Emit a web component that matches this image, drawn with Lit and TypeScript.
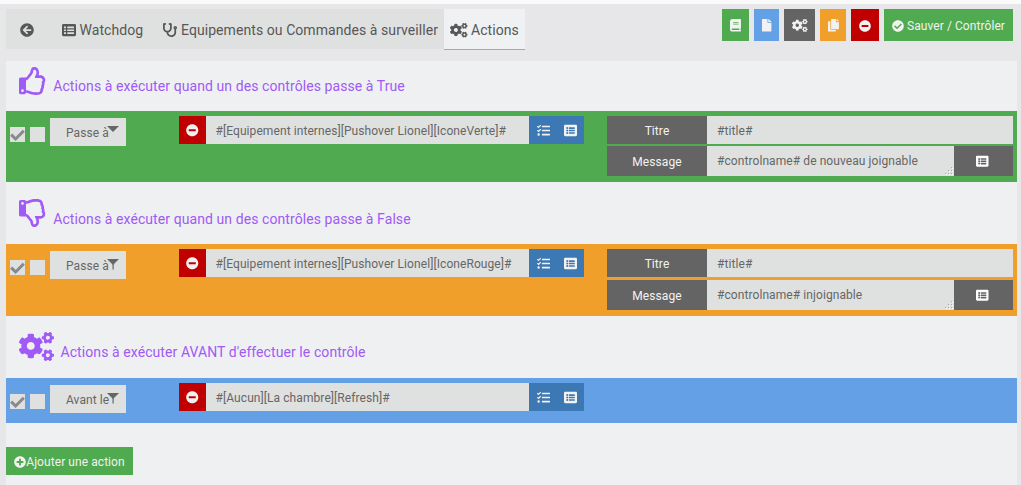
import { LitElement, html, css, svg, nothing } from "lit";
import { customElement, property } from "lit/decorators.js";

const smallCog =
  "M512.1 191l-8.2 14.3c-3 5.3-9.4 7.5-15.1 5.4-11.8-4.4-22.6-10.7-32.1-18.6-4.6-3.8-5.8-10.5-2.8-15.7l8.2-14.3c-6.9-8-12.3-17.3-15.9-27.4h-16.5c-6 0-11.2-4.3-12.2-10.3-2-12-2.1-24.6 0-37.1 1-6 6.2-10.4 12.2-10.4h16.5c3.6-10.1 9-19.4 15.9-27.4l-8.2-14.3c-3-5.2-1.9-11.9 2.8-15.7 9.5-7.9 20.4-14.2 32.1-18.6 5.7-2.1 12.1.1 15.1 5.4l8.2 14.3c10.5-1.9 21.2-1.9 31.7 0L552 6.3c3-5.3 9.4-7.5 15.1-5.4 11.8 4.4 22.6 10.7 32.1 18.6 4.6 3.8 5.8 10.5 2.8 15.7l-8.2 14.3c6.9 8 12.3 17.3 15.9 27.4h16.5c6 0 11.2 4.3 12.2 10.3 2 12 2.1 24.6 0 37.1-1 6-6.2 10.4-12.2 10.4h-16.5c-3.6 10.1-9 19.4-15.9 27.4l8.2 14.3c3 5.2 1.9 11.9-2.8 15.7-9.5 7.9-20.4 14.2-32.1 18.6-5.7 2.1-12.1-.1-15.1-5.4l-8.2-14.3c-10.4 1.9-21.2 1.9-31.7 0zm-10.5-58.8c38.5 29.6 82.4-14.3 52.8-52.8-38.5-29.7-82.4 14.3-52.8 52.8z";
const bigCog =
  "M386.3 286.1l33.7 16.8c10.1 5.8 14.5 18.1 10.5 29.1-8.9 24.2-26.4 46.4-42.6 65.8-7.4 8.9-20.2 11.1-30.3 5.3l-29.1-16.8c-16 13.7-34.6 24.6-54.9 31.7v33.6c0 11.6-8.3 21.6-19.7 23.6-24.6 4.2-50.4 4.4-75.9 0-11.5-2-20-11.9-20-23.6V418c-20.3-7.2-38.9-18-54.9-31.7L74 403c-10 5.8-22.9 3.6-30.3-5.3-16.2-19.4-33.3-41.6-42.2-65.7-4-10.9.4-23.2 10.5-29.1l33.3-16.8c-3.9-20.9-3.9-42.4 0-63.4L12 205.8c-10.1-5.8-14.6-18.1-10.5-29 8.9-24.2 26-46.4 42.2-65.8 7.4-8.9 20.2-11.1 30.3-5.3l29.1 16.8c16-13.7 34.6-24.6 54.9-31.7V57.1c0-11.5 8.2-21.5 19.6-23.5 24.6-4.2 50.5-4.4 76-.1 11.5 2 20 11.9 20 23.6v33.6c20.3 7.2 38.9 18 54.9 31.7l29.1-16.8c10-5.8 22.9-3.6 30.3 5.3 16.2 19.4 33.2 41.6 42.1 65.8 4 10.9.1 23.2-10 29.1l-33.7 16.8c3.9 21 3.9 42.5 0 63.5zm-117.6 21.1c59.2-77-28.7-164.9-105.7-105.7-59.2 77 28.7 164.9 105.7 105.7z";
const thumb =
  "M466.27 286.69C475.04 271.84 480 256 480 236.85c0-44.015-37.218-85.58-85.82-85.58H357.7c4.92-12.81 8.85-28.13 8.85-46.54C366.55 31.936 328.86 0 271.28 0c-61.607 0-58.093 94.933-71.76 108.6-22.747 22.747-49.615 66.447-68.76 83.4H32c-17.673 0-32 14.327-32 32v240c0 17.673 14.327 32 32 32h64c14.893 0 27.408-10.174 30.978-23.95 44.509 1.001 75.06 39.94 177.802 39.94 7.22 0 15.22.01 22.22.01 77.117 0 111.986-39.423 112.94-95.33 13.319-18.425 20.299-43.122 17.34-66.99 9.854-18.452 13.664-40.343 8.99-62.99zm-61.75 53.83c12.56 21.13 1.26 49.41-13.94 57.57 7.7 48.78-17.608 65.9-53.12 65.9h-37.82c-71.639 0-118.029-37.82-171.64-37.82V240h10.92c28.36 0 67.98-70.89 94.54-97.46 28.36-28.36 18.91-75.63 37.82-94.54 47.27 0 47.27 32.98 47.27 56.73 0 39.17-28.36 56.72-28.36 94.54h103.99c21.11 0 37.73 18.91 37.82 37.82.09 18.9-12.82 37.81-22.27 37.81 13.489 14.555 16.371 45.236-5.21 65.62zM88 432c0 13.255-10.745 24-24 24s-24-10.745-24-24 10.745-24 24-24 24 10.745 24 24z";

const p = (d: string) => svg`<path fill-rule="evenodd" d=${d}></path>`;
const disc = "M256 8C119 8 8 119 8 256s111 248 248 248 248-111 248-248S393 8 256 8z";
const lineRow = (y: number) =>
  `M88 ${y}a40 40 0 1 0 80 0a40 40 0 1 0-80 0zM204 ${y - 32}h208a12 12 0 0 1 12 12v40a12 12 0 0 1-12 12h-208a12 12 0 0 1-12-12v-40a12 12 0 0 1 12-12z`;

// Glyph width on a 512-unit em, and its drawing.
const ICONS: Record<string, [number, unknown]> = {
  back: [512, p("M256 504C119 504 8 393 8 256S119 8 256 8s248 111 248 248-111 248-248 248zm28.9-143.6L209.4 288H392c13.3 0 24-10.7 24-24v-16c0-13.3-10.7-24-24-24H209.4l75.5-72.4c9.7-9.3 9.9-24.8.4-34.3l-11-10.9c-9.4-9.4-24.6-9.4-33.9 0L107.7 239c-9.4 9.4-9.4 24.6 0 33.9l132.7 132.7c9.4 9.4 24.6 9.4 33.9 0l11-10.9c9.5-9.5 9.3-25-.4-34.3z")],
  table: [512, p("M464 32H48C21.5 32 0 53.500 0 80v352c0 26.500 21.500 48 48 48h416c26.500 0 48-21.500 48-48V80c0-26.500-21.500-48-48-48zM72 128h72v64H72zM192 128h248v64H192zM72 234h72v56H72zM192 234h248v56H192zM72 336h72v64H72zM192 336h248v64H192z")],
  list: [512, p("M464 480H48c-26.510 0-48-21.490-48-48V80c0-26.510 21.490-48 48-48h416c26.510 0 48 21.490 48 48v352c0 26.510-21.490 48-48 48z" + lineRow(160) + lineRow(256) + lineRow(352))],
  stethoscope: [512, p("M447.1 112c-34.2.5-62.3 28.400-63 62.600-.5 24.300 12.500 45.600 32 56.800V344c0 57.300-50.200 104-112 104-60 0-109.200-44.100-111.900-99.200C265 333.800 320 269.200 320 192V36.600c0-11.400-8.100-21.300-19.300-23.500L237.800.5c-13-2.600-25.600 5.800-28.200 18.800L206.400 35c-2.600 13 5.800 25.600 18.800 28.200l30.700 6.100v121.400c0 52.900-42.200 96.700-95.100 97.200-53.400.5-96.900-42.700-96.900-96V69.400l30.700-6.100c13-2.600 21.400-15.200 18.800-28.200l-3.100-15.700C107.700 6.400 95.100-2 82.100.6L19.300 13C8.100 15.300 0 25.100 0 36.600V192c0 77.300 55.100 142 128.100 156.800C130.700 439.200 208.600 512 304 512c97 0 176-75.400 176-168V231.400c19.100-11.100 32-31.700 32-55.400 0-35.700-29.200-64.500-64.900-64zm.9 80c-8.800 0-16-7.200-16-16s7.200-16 16-16 16 7.200 16 16-7.200 16-16 16z")],
  cogs: [640, svg`${p(smallCog)}${p(bigCog)}<g transform="translate(0 320)">${p(smallCog)}</g>`],
  book: [448, p("M448 360V24c0-13.300-10.700-24-24-24H96C43 0 0 43 0 96v320c0 53 43 96 96 96h328c13.300 0 24-10.700 24-24v-16c0-7.500-3.500-14.300-8.900-18.700-4.200-15.400-4.200-59.300 0-74.700 5.400-4.300 8.900-11.100 8.900-18.600zM128 134c0-3.300 2.700-6 6-6h212c3.300 0 6 2.700 6 6v20c0 3.300-2.700 6-6 6H134c-3.300 0-6-2.700-6-6zM128 198c0-3.300 2.700-6 6-6h212c3.300 0 6 2.700 6 6v20c0 3.300-2.700 6-6 6H134c-3.300 0-6-2.700-6-6zM381.400 448H96c-17.700 0-32-14.300-32-32 0-17.600 14.400-32 32-32h285.400c-1.900 17.100-1.900 46.900 0 64z")],
  file: [384, p("M224 136V0H24C10.700 0 0 10.700 0 24v464c0 13.300 10.700 24 24 24h336c13.300 0 24-10.700 24-24V160H248c-13.200 0-24-10.800-24-24zm160-14.100v6.100H256V0h6.100c6.400 0 12.500 2.500 17 7l97.900 98c4.500 4.500 7 10.600 7 16.900z")],
  copy: [448, p("M320 448v40c0 13.255-10.745 24-24 24H24c-13.255 0-24-10.745-24-24V120c0-13.255 10.745-24 24-24h72v296c0 30.879 25.121 56 56 56h168zm0-344V0H152c-13.255 0-24 10.745-24 24v368c0 13.255 10.745 24 24 24h272c13.255 0 24-10.745 24-24V128H344c-13.200 0-24-10.800-24-24zm120.971-31.029L375.029 7.029A24 24 0 0 0 358.059 0H352v96h96v-6.059a24 24 0 0 0-7.029-16.970z")],
  minus: [512, p(disc + "M124 296c-6.600 0-12-5.400-12-12v-56c0-6.600 5.400-12 12-12h264c6.600 0 12 5.400 12 12v56c0 6.600-5.400 12-12 12H124z")],
  plus: [512, p(disc + "m144 276c0 6.600-5.400 12-12 12h-92v92c0 6.600-5.400 12-12 12h-56c-6.600 0-12-5.400-12-12v-92h-92c-6.600 0-12-5.400-12-12v-56c0-6.600 5.400-12 12-12h92v-92c0-6.600 5.400-12 12-12h56c6.600 0 12 5.400 12 12v92h92c6.600 0 12 5.400 12 12v56z")],
  check: [512, p("M504 256c0 136.967-111.033 248-248 248S8 392.967 8 256 119.033 8 256 8s248 111.033 248 248zM227.314 387.314l184-184c6.248-6.248 6.248-16.379 0-22.627l-22.627-22.627c-6.248-6.249-16.379-6.249-22.628 0L216 308.118l-70.059-70.059c-6.248-6.248-16.379-6.248-22.628 0l-22.627 22.627c-6.248 6.248-6.248 16.379 0 22.627l104 104c6.249 6.249 16.379 6.249 22.628.001z")],
  tasks: [512, p("M139.610 35.500a12 12 0 0 0-17 0L58.930 98.810l-22.700-22.120a12 12 0 0 0-17 0L3.530 92.410a12 12 0 0 0 0 17l47.590 47.400a12.780 12.780 0 0 0 17.610 0l15.590-15.620L156.520 69a12.090 12.090 0 0 0 .09-17zm0 159.190a12 12 0 0 0-17 0l-63.680 63.720-22.700-22.100a12 12 0 0 0-17 0L3.530 252a12 12 0 0 0 0 17L51 316.500a12.770 12.770 0 0 0 17.600 0l15.700-15.690 72.200-72.220a12 12 0 0 0 .09-16.900zM64 368a48 48 0 1 0 0 96a48 48 0 0 0 0-96zM208 64h288a16 16 0 0 1 16 16v32a16 16 0 0 1-16 16H208a16 16 0 0 1-16-16V80a16 16 0 0 1 16-16zM208 224h288a16 16 0 0 1 16 16v32a16 16 0 0 1-16 16H208a16 16 0 0 1-16-16v-32a16 16 0 0 1 16-16zM208 384h288a16 16 0 0 1 16 16v32a16 16 0 0 1-16 16H208a16 16 0 0 1-16-16v-32a16 16 0 0 1 16-16z")],
  up: [480, p(thumb)],
  down: [480, svg`<g transform="matrix(1 0 0 -1 0 512)">${p(thumb)}</g>`],
};

const icon = (name: string, size: number) => {
  const [w, body] = ICONS[name];
  return html`<svg class="icon" width=${(w / 512) * size} height=${size} viewBox="0 0 ${w} 512">${body}</svg>`;
};

@customElement("action-row")
class ActionRow extends LitElement {
  @property() tone = "green";
  @property() mode = "";
  @property() command = "";
  @property() titleText = "";
  @property() message = "";
  @property({ type: Boolean }) stem = false;

  static styles = css`
    :host { display: block; }
    * { box-sizing: border-box; }
    .icon { display: block; fill: currentColor; overflow: visible; flex: none; }
    .row { display: grid; grid-template-columns: 169px 405px 1fr; column-gap: 0; padding: 5px 4px 0; color: #666; font: 12px/20px Roboto, sans-serif; letter-spacing: 0.080px; }
    .green { background: #50aa50; height: 71px; }
    .orange { background: #f0a02a; height: 72px; }
    .blue { background: #64a0e6; height: 45px; }
    .left { display: flex; align-items: flex-start; padding-top: 2px; }
    .box { width: 15px; height: 15px; margin: 9px 5px 0 0; background: #dfe1e0; color: #87898b; }
    .box svg { display: block; }
    .select { position: relative; width: 76px; height: 28px; padding: 5px 0 3px 16px; background: #dfe1e0; white-space: nowrap; }
    .arrow { position: absolute; left: 57px; top: 8px; display: block; }
    .command, .line { display: flex; height: 28px; }
    .remove { flex: none; width: 27px; display: grid; place-items: center; background: #c00000; color: #f0f0f0; }
    .field { background: #dfe1e0; padding: 5px 10px 0; white-space: nowrap; line-height: 20px; flex: 1; }
    .command .field { padding-left: 9.500px; }
    .tools { flex: none; width: 55px; display: flex; align-items: center; padding-left: 8px; gap: 14px; background: #3c78b4; color: #f2f2f2; }
    .options { display: flex; flex-direction: column; gap: 2px; padding-left: 23px; }
    .orange .options { gap: 3px; }
    .label { width: 100px; display: grid; place-items: center; padding-top: 1px; background: #646464; color: #f2f2f2; }
    .tall { height: 30px; }
    .area { position: relative; }
    .grip { position: absolute; right: 1px; bottom: 1px; display: block; }
    .pick { width: 59px; display: grid; place-items: center; padding-right: 3px; background: #646464; color: #fff; }
  `;

  render() {
    return html`<div class="row ${this.tone}">
      <div class="left">
        <div class="box"><svg width="15" height="15" viewBox="0 0 15 15"><path d="M1.200 7.600L5.600 12L13.800 3.800" fill="none" stroke="currentColor" stroke-width="3"></path></svg></div>
        <div class="box"></div>
        <div class="select"><span>${this.mode}</span><svg class="arrow" width="12" height="12" viewBox="0 0 12 12" fill="#666"><path d="M0 0h12L6 6z"></path>${this.stem ? svg`<path d="M5.500 4h1.200v6.500h-1.200z"></path>` : nothing}</svg></div>
      </div>
      <div class="command">
        <div class="remove">${icon("minus", 12.500)}</div>
        <div class="field">${this.command}</div>
        <div class="tools">${icon("tasks", 13)}${icon("list", 13)}</div>
      </div>
      ${this.titleText
        ? html`<div class="options">
            <div class="line"><div class="label">Titre</div><div class="field">${this.titleText}</div></div>
            <div class="line tall">
              <div class="label">Message</div>
              <div class="field area">${this.message}<svg class="grip" width="9" height="9" viewBox="0 0 9 9" fill="#aaa"><path d="M7 1h1v1H7zM4 4h1v1H4zM7 4h1v1H7zM1 7h1v1H1zM4 7h1v1H4zM7 7h1v1H7z"></path><path fill="#fff" d="M8 2h1v1H8zM5 5h1v1H5zM8 5h1v1H8zM2 8h1v1H2zM5 8h1v1H5zM8 8h1v1H8z"></path></svg></div>
              <div class="pick">${icon("list", 12.5)}</div>
            </div>
          </div>`
        : nothing}
    </div>`;
  }
}

@customElement("app-root")
class AppRoot extends LitElement {
  static styles = css`
    :host { display: block; height: 485px; overflow: hidden; background: #e7e7e9; border-top: 4px solid #fafafa; box-sizing: border-box; font: 12px/20px Roboto, sans-serif; letter-spacing: 0.070px; }
    * { box-sizing: border-box; }
    .icon { display: block; fill: currentColor; overflow: visible; flex: none; }
    .top { display: flex; justify-content: space-between; align-items: flex-start; height: 57px; padding: 5px 8px 0 6px; }
    .tabs { display: flex; height: 40px; background: #dfe1e0; color: #575757; font-size: 14px; }
    .tab { display: flex; align-items: center; gap: 3.500px; height: 40px; padding-top: 2px; white-space: nowrap; }
    .t0 { width: 50px; padding-left: 14px; }
    .t1 { width: 101px; padding-left: 6px; }
    .t2 { width: 287px; padding-left: 6px; gap: 4px; }
    .active { width: 81px; height: 41px; padding-left: 6px; background: #eff1f3; border-bottom: 1px solid #9bc33c; }
    .buttons { display: flex; gap: 5px; }
    .btn { display: flex; align-items: center; justify-content: center; height: 32px; padding-top: 1px; color: #f2f2f2; gap: 3px; white-space: nowrap; }
    .green { background: #50aa50; } .blue { background: #64a0e6; } .grey { background: #646464; } .orange { background: #f0a02a; } .red { background: #c00000; }
    .w27 { width: 27px; } .w25 { width: 25px; } .w31 { width: 31px; } .w26 { width: 26px; } .w28 { width: 28px; } .w129 { width: 129px; padding-top: 2px; }
    .panel { margin: 0 4px 0 6px; height: 424px; background: #eff0f2; }
    .legend { display: flex; align-items: flex-start; gap: 8px; padding: 6px 0 0 13px; color: #a05af5; font-size: 14px; letter-spacing: 0.080px; }
    .legend span { padding-top: 9px; }
    .l1 { height: 50px; } .l2 { height: 62px; padding-top: 17px; } .l3 { height: 62px; padding-top: 16px; gap: 6.500px; }
    .l2 span, .l3 span { padding-top: 10px; }
    .add { width: 127px; height: 28px; margin-top: 24px; gap: 0; padding-top: 2px; }
  `;

  render() {
    return html`
      <div class="top">
        <div class="tabs">
          <div class="tab t0">${icon("back", 14)}</div>
          <div class="tab t1">${icon("table", 14)}<span>Watchdog</span></div>
          <div class="tab t2">${icon("stethoscope", 14)}<span>Equipements ou Commandes à surveiller</span></div>
          <div class="tab active">${icon("cogs", 14)}<span>Actions</span></div>
        </div>
        <div class="buttons">
          <div class="btn green w27">${icon("book", 12.500)}</div>
          <div class="btn blue w25">${icon("file", 12.500)}</div>
          <div class="btn grey w31">${icon("cogs", 12.500)}</div>
          <div class="btn orange w26">${icon("copy", 12.500)}</div>
          <div class="btn red w28">${icon("minus", 12)}</div>
          <div class="btn green w129">${icon("check", 12)}<span>Sauver / Contrôler</span></div>
        </div>
      </div>
      <div class="panel">
        <div class="legend l1">${icon("up", 28)}<span>Actions à exécuter quand un des contrôles passe à True</span></div>
        <action-row tone="green" mode="Passe à" command="#[Equipement internes][Pushover Lionel][IconeVerte]#" .titleText=${"#title#"} message="#controlname# de nouveau joignable"></action-row>
        <div class="legend l2">${icon("down", 28)}<span>Actions à exécuter quand un des contrôles passe à False</span></div>
        <action-row tone="orange" stem mode="Passe à" command="#[Equipement internes][Pushover Lionel][IconeRouge]#" .titleText=${"#title#"} message="#controlname# injoignable"></action-row>
        <div class="legend l3">${icon("cogs", 28)}<span>Actions à exécuter AVANT d'effectuer le contrôle</span></div>
        <action-row tone="blue" stem mode="Avant le" command="#[Aucun][La chambre][Refresh]#"></action-row>
        <div class="btn green add">${icon("plus", 12)}<span>Ajouter une action</span></div>
      </div>
    `;
  }
}
